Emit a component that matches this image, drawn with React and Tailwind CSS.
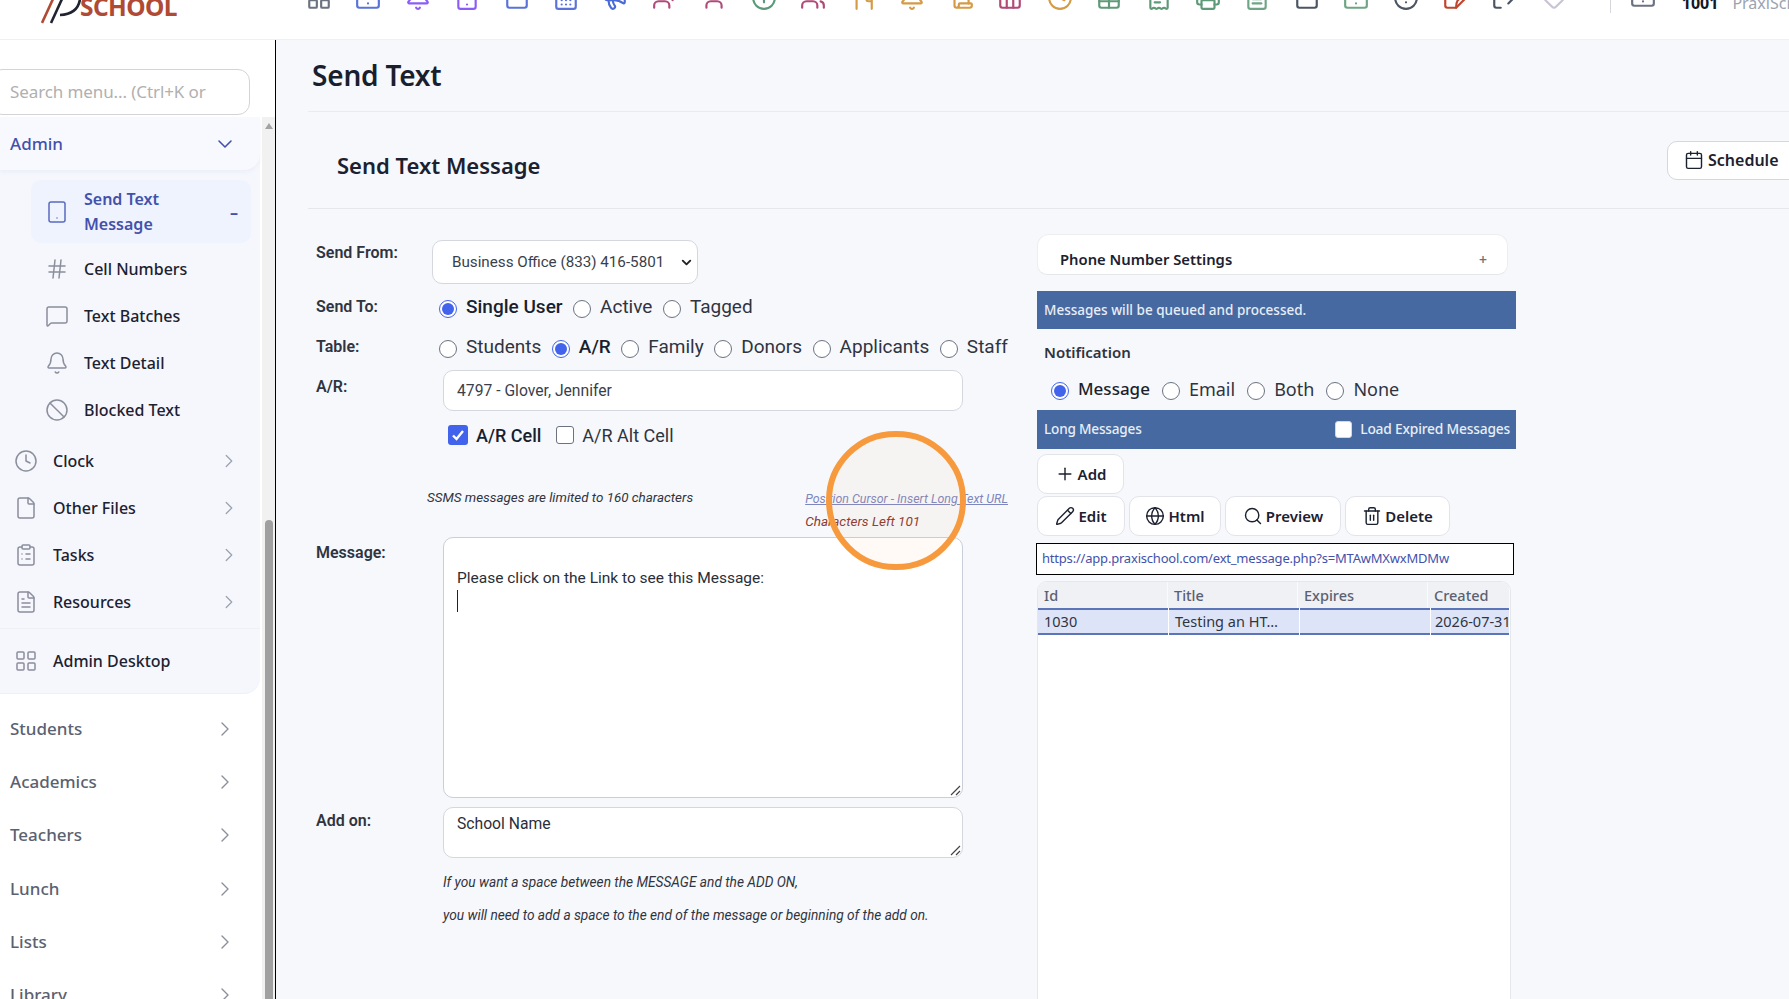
import React from "react";
import {
  LayoutGrid, Bell, Tablet, Square, Calendar, CalendarDays, Megaphone, UserPlus, User, CirclePlus, Users,
  Utensils, ScrollText, Columns3, Clock, Table, FileText, Printer, Hash, MessageSquare, Ban, File,
  ClipboardList, ChevronDown, ChevronRight, Plus, Pencil, Globe, Search, Trash2, CircleAlert,
  LogOut, Heart, ReceiptText
} from "lucide-react";

const plex = { fontFamily: '"Noto Sans", "Open Sans", sans-serif' };

function LandTablet({ size = 26, className = "" }) {
  return (
    <svg width={size} height={size} viewBox="0 0 24 24" fill="none" stroke="currentColor" strokeWidth="2" strokeLinecap="round" className={className}>
      <rect x="2" y="3" width="20" height="18" rx="2" />
      <path d="M12 17h.01" />
    </svg>
  );
}

function NoteFold({ size = 26, className = "" }) {
  return (
    <svg width={size} height={size} viewBox="0 0 24 24" fill="none" stroke="currentColor" strokeWidth="2" strokeLinecap="round" strokeLinejoin="round" className={className}>
      <path d="M3 3h18v10l-8 8H5a2 2 0 0 1-2-2z" />
      <path d="M21 12c-5 0-8 1-8 9" />
    </svg>
  );
}

const topIcons = [
  [LayoutGrid, "text-[#6b7280]"], [LandTablet, "text-[#5a73d8]"], [Bell, "text-[#8b5cf6]"], [Tablet, "text-[#8b5cf6]"],
  [Square, "text-[#5a73d8]"], [CalendarDays, "text-[#5a73d8]"], [Megaphone, "text-[#4a6ad8]"], [UserPlus, "text-[#b04a78]"],
  [User, "text-[#b04a78]"], [CirclePlus, "text-[#5a9a78]"], [Users, "text-[#b04a78]"], [Utensils, "text-[#d49a45]"],
  [Bell, "text-[#d49a45]"], [ScrollText, "text-[#d49a45]"], [Columns3, "text-[#b04a78]"], [Clock, "text-[#d49a45]"],
  [Table, "text-[#5f9a78]"], [ReceiptText, "text-[#5f9a78]"], [Printer, "text-[#5f9a78]"], [FileText, "text-[#6fa585]"],
  [Square, "text-[#4b5563]"], [LandTablet, "text-[#6fa585]"], [CircleAlert, "text-[#4b5563]"], [NoteFold, "text-[#c0452e]"],
  [LogOut, "text-[#4b5563]"], [Heart, "text-[#c9c3d6]"],
];

function TopBar() {
  return (
    <header className="h-10 bg-white flex items-end overflow-hidden border-b border-[#eef0f4] shrink-0 pb-[28px]">
      <div className="w-[305px] shrink-0 flex items-end pl-[41px] relative">
        <svg width="40" height="26" viewBox="0 0 40 26" className="shrink-0 mb-[-13px]">
          <path d="M1 25 L12 1" stroke="#b04a34" strokeWidth="2.6" fill="none" />
          <path d="M10 25 L21 1" stroke="#1f2430" strokeWidth="2.6" fill="none" />
          <path d="M39 1 Q37 16 19 17" stroke="#1f2430" strokeWidth="2.6" fill="none" />
        </svg>
        <span className="text-[24.5px] leading-none font-bold text-[#b04a34] tracking-tight mb-[-8px] ml-[-1px]" style={plex}>SCHOOL</span>
      </div>
      <div className="flex items-end gap-[23.4px] ml-[1px]">
        {topIcons.map(([I, c], i) => (
          <I key={i} size={26} strokeWidth={2} className={`${c} shrink-0`} />
        ))}
      </div>
      <div className="flex items-end ml-[43px] mb-[-2px]">
        <div className="w-px h-8 bg-[#d5d7dc]" />
        <LandTablet size={26} className="text-[#6b7280] ml-[19px] shrink-0 mb-[4px]" />
        <span className="ml-[26px] mb-[2px] text-[16px] leading-none font-bold text-[#111827] whitespace-nowrap" style={plex}>1001</span>
        <span className="ml-[14px] mb-[2px] text-[16px] leading-none text-[#9ca3af] whitespace-nowrap" style={plex}>PraxiSchool</span>
      </div>
    </header>
  );
}

function SubItem({ icon: I, label }) {
  return (
    <div className="h-[47px] flex items-center pl-[45px]">
      <I size={24} strokeWidth={1.5} className="text-[#8b8f9c] shrink-0" />
      <span className="ml-[15px] text-[16px] font-medium text-[#1c2130]">{label}</span>
    </div>
  );
}

function MidItem({ icon: I, label }) {
  return (
    <div className="h-[47px] flex items-center pl-[14px] pr-[20px]">
      <I size={24} strokeWidth={1.5} className="text-[#8b8f9c] shrink-0" />
      <span className="ml-[15px] text-[16px] font-medium text-[#1c2130] flex-1">{label}</span>
      <ChevronRight size={22} strokeWidth={1.4} className="text-[#9ca3af]" />
    </div>
  );
}

function TopItem({ label }) {
  return (
    <div className="h-[53.3px] shrink-0 flex items-center pl-[10px] pr-[25px]">
      <span className="text-[17px] font-medium text-[#5b6170] flex-1">{label}</span>
      <ChevronRight size={24} strokeWidth={1.4} className="text-[#8b8f9c]" />
    </div>
  );
}

function Sidebar() {
  return (
    <aside className="w-[276px] shrink-0 bg-white border-r border-black flex flex-col overflow-hidden" style={plex}>
      <div className="h-[77px] shrink-0 pt-[29px] pl-0">
        <div className="ml-[-10px] w-[260px] h-[46px] border border-[#d4d4d8] rounded-xl bg-white flex items-center pl-[19px] text-[17px] text-[#b0b0b0] tracking-[-0.1px] whitespace-nowrap overflow-hidden">
          Search menu... (Ctrl+K or
        </div>
      </div>
      <div className="flex flex-1 min-h-0">
        <div className="w-[262px] shrink-0 overflow-hidden">
          <div className="w-[260px] bg-[#f5f7fd] rounded-br-2xl border-b border-[#eef0f5] h-[577px] flex flex-col">
            <div className="h-[53px] shrink-0 bg-[#f8f9fe] rounded-br-2xl flex items-center pl-[10px] pr-[23px] shadow-[0_2px_4px_rgba(60,80,160,0.05)]">
              <span className="text-[17px] font-medium text-[#4351ac] flex-1">Admin</span>
              <ChevronDown size={24} strokeWidth={1.6} className="text-[#4351ac]" />
            </div>
            <div className="ml-[31px] mr-[9px] mt-[10px] h-[63px] shrink-0 bg-[#eff3fd] rounded-[10px] flex items-center pl-[14px] pr-[13px]">
              <Tablet size={24} strokeWidth={1.5} className="text-[#5b6ac0] shrink-0" />
              <span className="ml-[15px] text-[16px] leading-[25px] font-semibold text-[#4351ac] flex-1">Send Text<br />Message</span>
              <span className="text-[#4351ac] font-bold text-[16px]">–</span>
            </div>
            <div className="mt-[2px] shrink-0">
              <SubItem icon={Hash} label="Cell Numbers" />
              <SubItem icon={MessageSquare} label="Text Batches" />
              <SubItem icon={Bell} label="Text Detail" />
              <SubItem icon={Ban} label="Blocked Text" />
            </div>
            <div className="mt-[4px] shrink-0">
              <MidItem icon={Clock} label="Clock" />
              <MidItem icon={File} label="Other Files" />
              <MidItem icon={ClipboardList} label="Tasks" />
              <MidItem icon={FileText} label="Resources" />
            </div>
            <div className="mt-[3px] border-t border-[#eef0f5] h-[64px] shrink-0 flex items-center pl-[14px]">
              <LayoutGrid size={24} strokeWidth={1.5} className="text-[#8b8f9c] shrink-0" />
              <span className="ml-[15px] text-[16px] font-medium text-[#1c2130]">Admin Desktop</span>
            </div>
          </div>
          <div className="pt-[8px]">
            <TopItem label="Students" />
            <TopItem label="Academics" />
            <TopItem label="Teachers" />
            <TopItem label="Lunch" />
            <TopItem label="Lists" />
            <TopItem label="Library" />
          </div>
        </div>
        <div className="flex-1 bg-[#f1f1f1] flex flex-col items-center">
          <div className="mt-[6px] w-0 h-0 border-l-[4px] border-r-[4px] border-b-[6px] border-l-transparent border-r-transparent border-b-[#a3a3a3]" />
          <div className="mt-[391px] w-[8px] flex-1 bg-[#a0a0a0] rounded-t-[4px]" />
        </div>
      </div>
    </aside>
  );
}

function Radio({ label, checked, size = "text-[19px]" }) {
  return (
    <label className={`flex items-center whitespace-nowrap ${size}`}>
      <span className={`w-[18px] h-[18px] mt-[4px] rounded-full border ${checked ? "border-[#4263eb]" : "border-[#6b7280]"} bg-white flex items-center justify-center shrink-0`}>
        {checked && <span className="w-[12px] h-[12px] rounded-full bg-[#4263eb]" />}
      </span>
      <span className={`ml-[9px] ${checked ? "font-medium text-[#1a1f2e]" : "text-[#30343f]"}`}>{label}</span>
    </label>
  );
}

function Label({ children, className = "" }) {
  return <div className={`w-[127px] shrink-0 pl-[8px] text-[16px] font-semibold text-[#30343f] ${className}`}>{children}</div>;
}

function LeftForm() {
  const cond = { fontFamily: '"Roboto", "Noto Sans", sans-serif' };
  return (
    <div className="w-[700px] shrink-0 text-[#30343f] relative" style={cond}>
      <div className="flex items-start h-[50px]">
        <Label className="pt-[1px] !w-[124px]">Send From:</Label>
        <div className="w-[266px] h-[44px] border border-[#d5d7de] rounded-[10px] bg-white flex items-center pl-[19px] pr-[3px] text-[15.2px] text-[#3a3f4b]">
          <span className="flex-1 whitespace-nowrap">Business Office (833) 416-5801</span>
          <ChevronDown size={15} strokeWidth={3} className="text-[#222]" />
        </div>
      </div>
      <div className="flex items-center h-[36px] mt-[-1px]">
        <Label className="!w-[124px]">Send To:</Label>
        <div className="flex gap-[10.5px] ml-[7px]">
          <Radio label="Single User" checked />
          <Radio label="Active" />
          <Radio label="Tagged" />
        </div>
      </div>
      <div className="flex items-center h-[36px] mt-[4px]">
        <Label className="!w-[124px]">Table:</Label>
        <div className="flex gap-[10.5px] ml-[7px]">
          <Radio label="Students" />
          <Radio label="A/R" checked />
          <Radio label="Family" />
          <Radio label="Donors" />
          <Radio label="Applicants" />
          <Radio label="Staff" />
        </div>
      </div>
      <div className="flex items-start mt-[5px]">
        <Label className="pt-[5px] !w-[135px]">A/R:</Label>
        <div className="w-[520px] h-[41px] border border-[#d5d7de] rounded-[10px] bg-white flex items-center pl-[13px] text-[15.7px] text-[#3a3f4b]">4797 - Glover, Jennifer</div>
      </div>
      <div className="flex items-center h-[24px] mt-[12px] ml-[140px] text-[18px] whitespace-nowrap">
        <span className="w-[20px] h-[20px] rounded-[3px] bg-[#4263eb] flex items-center justify-center shrink-0">
          <svg width="14" height="14" viewBox="0 0 14 14"><path d="M2 7.5 L5.5 11 L12 3" stroke="white" strokeWidth="2.4" fill="none" /></svg>
        </span>
        <span className="ml-[8px] font-medium text-[#1a1f2e]">A/R Cell</span>
        <span className="ml-[15px] w-[18px] h-[18px] rounded-[3px] border border-[#6b7280] bg-white shrink-0" />
        <span className="ml-[8px] text-[#30343f]">A/R Alt Cell</span>
      </div>
      <div className="flex mt-[40px] italic h-[46px]">
        <div className="ml-[119px] w-[379px] text-[#30343f] pt-[1px] text-[13.4px]">SSMS messages are limited to 160 characters</div>
        <div className="leading-[23px]">
          <div className="text-[#7d86bd] underline whitespace-nowrap text-[12.4px]">Position Cursor - Insert Long Text URL</div>
          <div className="text-[#8a3a30] text-[13.5px]">Characters Left 101</div>
        </div>
      </div>
      <div className="flex items-start mt-[4px]">
        <Label className="pt-[4px] !w-[135px]">Message:</Label>
        <div className="w-[520px] h-[261px] border border-[#c9ced9] rounded-[10px] bg-white pl-[13px] pt-[29px] text-[15.5px] leading-[22px] text-[#2a2e38] relative">
          Please click on the Link to see this Message:
          <div className="w-px h-[22px] bg-[#222] mt-[1px]" />
          <Grip />
        </div>
      </div>
      <div className="flex items-start mt-[9px]">
        <Label className="pt-[2px] !w-[135px]">Add on:</Label>
        <div className="w-[520px] h-[51px] border border-[#d5d7de] rounded-[10px] bg-white pl-[13px] pt-[5px] text-[15.7px] leading-[22px] text-[#2a2e38] relative">
          School Name
          <Grip />
        </div>
      </div>
      <div className="ml-[135px] mt-[8px] text-[13.7px] italic text-[#30343f] leading-[33px]">
        <div>If you want a space between the MESSAGE and the ADD ON,</div>
        <div className="whitespace-nowrap">you will need to add a space to the end of the message or beginning of the add on.</div>
      </div>
    </div>
  );
}

function Grip() {
  return (
    <svg width="11" height="11" viewBox="0 0 11 11" className="absolute right-[1px] bottom-[1px]">
      <path d="M10 1 L1 10 M10 6 L6 10" stroke="#444" strokeWidth="1.2" />
    </svg>
  );
}

function Btn({ icon: I, label, className = "" }) {
  return (
    <div className={`h-[40px] border border-[#e2e4ea] rounded-[10px] bg-white flex items-center justify-center gap-[3px] text-[15px] font-semibold text-[#1c2130] shrink-0 ${className}`}>
      <I size={20} strokeWidth={1.7} className="text-[#1c2130]" />
      {label}
    </div>
  );
}

function RightCol() {
  const cols = ["w-[130px]", "w-[130px]", "w-[130px]", "flex-1"];
  return (
    <div className="w-[479px] shrink-0 mt-[-6px]" style={plex}>
      <div className="w-[471px] h-[41px] bg-white border border-[#eceef2] border-b-[#e5e7eb] rounded-t-[12px] rounded-b-[10px] flex items-center pl-[22px] pr-[20px] pt-[9px] text-[14.8px] font-semibold text-[#1c2130]">
        <span className="flex-1">Phone Number Settings</span>
        <span className="text-[#6b7280] text-[14px]">+</span>
      </div>
      <div className="mt-[16px] h-[38px] bg-[#4669a1] flex items-center pl-[7px] text-[13.5px] font-medium text-[#e8eef6]">Messages will be queued and processed.</div>
      <div className="mt-[13px] pl-[7px] text-[15px] font-semibold text-[#30343f] leading-[20px]">Notification</div>
      <div className="mt-[15px] pl-[14px] h-[24px] flex items-center gap-[12px]">
        <Radio label="Message" checked size="text-[17px]" />
        <Radio label="Email" size="text-[18px]" />
        <Radio label="Both" size="text-[18px]" />
        <Radio label="None" size="text-[18px]" />
      </div>
      <div className="mt-[9px] h-[39px] bg-[#4669a1] flex items-center pl-[7px] pr-[6px] text-[13.6px] font-medium text-[#e8eef6] tracking-[-0.2px]">
        <span className="flex-1">Long Messages</span>
        <span className="w-[17px] h-[17px] rounded-[3px] bg-white border border-[#d5d7de] mr-[8px]" />
        <span className="text-[13.8px]">Load Expired Messages</span>
      </div>
      <div className="mt-[5px]">
        <Btn icon={Plus} label="Add" className="w-[87px]" />
      </div>
      <div className="mt-[2px] flex gap-[4px]">
        <Btn icon={Pencil} label="Edit" className="w-[88px]" />
        <Btn icon={Globe} label="Html" className="w-[92px]" />
        <Btn icon={Search} label="Preview" className="w-[116px]" />
        <Btn icon={Trash2} label="Delete" className="w-[105px]" />
      </div>
      <div className="mt-[7px] ml-[-1px] w-[478px] h-[32px] border border-black bg-white flex items-center pl-[5px] text-[13px] text-[#4351ac] tracking-[-0.2px] whitespace-nowrap">https://app.praxischool.com/ext_message.php?s=MTAwMXwxMDMw</div>
      <div className="mt-[6px] w-[474px] h-[500px] border border-[#e5e7eb] rounded-t-[10px] bg-white overflow-hidden">
        <div className="flex h-[26px] bg-[#f0f1f5] text-[14.5px] font-medium text-[#5b6170] leading-[26px]">
          {["Id", "Title", "Expires", "Created"].map((h, i) => (
            <div key={h} className={`${cols[i]} shrink-0 pl-[6px] border-r border-[#fafafa]`}>{h}</div>
          ))}
        </div>
        <div className="flex h-[27px] text-[14.5px] text-[#30343f] leading-[22px]">
          {["1030", "Testing an HT…", "", "2026-07-31"].map((h, i) => (
            <div key={i} className={`${cols[i]} shrink-0 ${i === 3 ? "pl-[4px]" : "pl-[6px]"} bg-[#dde4f8] border-y-2 border-[#5b75b8] mr-px whitespace-nowrap overflow-hidden`}>{h}</div>
          ))}
        </div>
      </div>
    </div>
  );
}

export default function App() {
  return (
    <div className="w-[1789px] h-[999px] overflow-hidden flex flex-col bg-[#f6f8fc] relative">
      <TopBar />
      <div className="flex flex-1 min-h-0">
        <Sidebar />
        <main className="flex-1 min-w-0 pl-[32px] overflow-hidden">
          <div className="h-[72px] border-b border-[#e9ebf0] flex items-center pl-[4px] pb-[2px]">
            <h1 className="text-[28px] font-semibold text-[#1a1f2e] tracking-[-0.2px]" style={plex}>Send Text</h1>
          </div>
          <div className="h-[97px] border-b border-[#e5e7eb] flex items-center pl-[29px] ml-0 relative" style={plex}>
            <h2 className="text-[22px] font-semibold text-[#1c2130] flex-1 mt-[11px]">Send Text Message</h2>
            <div className="w-[140px] h-[39px] mr-[-18px] border border-[#d5d7de] rounded-[10px] bg-white flex items-center pl-[16px] text-[16px] font-semibold text-[#1c2130] shrink-0">
              <Calendar size={20} strokeWidth={1.7} className="mr-[4px]" />Schedule
            </div>
          </div>
          <div className="flex pt-[31px] pl-0">
            <LeftForm />
            <div className="ml-[29px]"><RightCol /></div>
          </div>
        </main>
      </div>
      <div className="absolute left-[826px] top-[431px] w-[140px] h-[139px] rounded-full border-[6px] border-[#f79a3e] bg-[#ffa050]/5" />
    </div>
  );
}
